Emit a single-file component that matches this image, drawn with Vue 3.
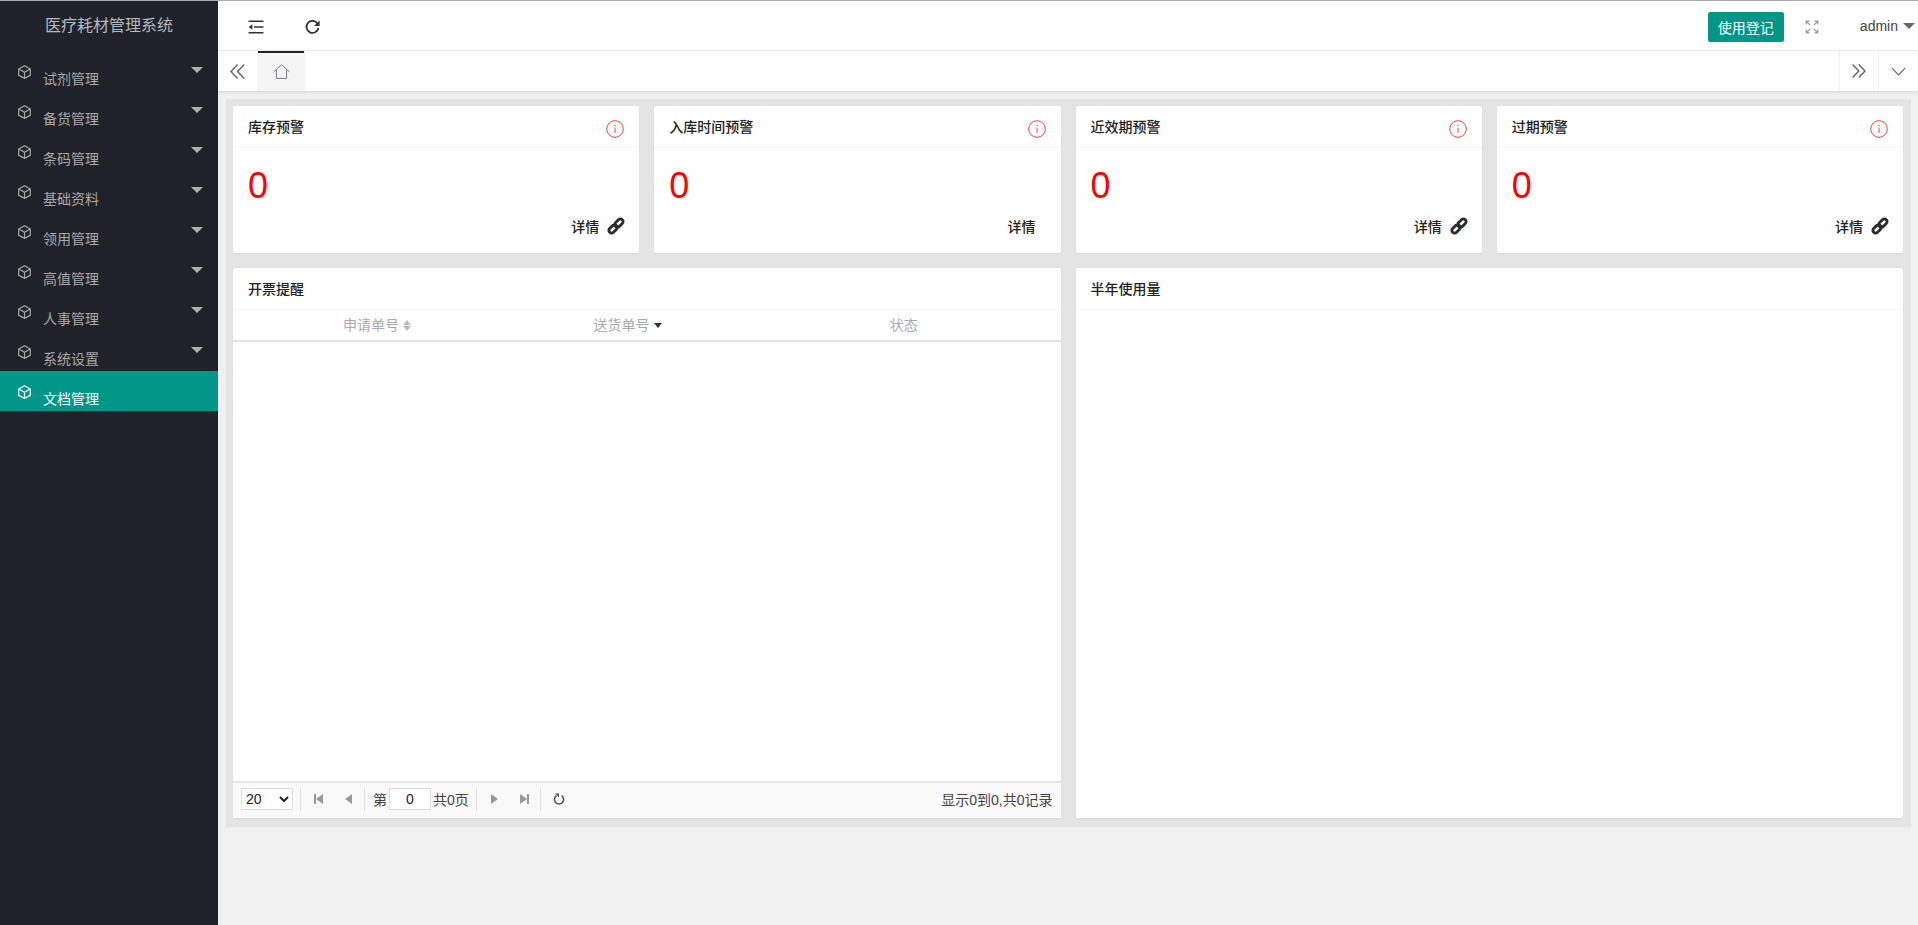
<script setup>
const menus = ['试剂管理','备货管理','条码管理','基础资料','领用管理','高值管理','人事管理','系统设置','文档管理']
const cards = [
  { title: '库存预警', link: true },
  { title: '入库时间预警', link: false },
  { title: '近效期预警', link: true },
  { title: '过期预警', link: true }
]
</script>

<template>
  <div class="app">
    <aside class="side">
      <div class="logo">医疗耗材管理系统</div>
      <nav class="menu">
        <div v-for="(m, i) in menus" :key="m" class="item" :class="{ active: i === 8 }">
          <svg class="cube" viewBox="0 0 13 14" width="13" height="14" fill="none" stroke="currentColor" stroke-width="1.2">
            <path d="M6.5.7 12.3 4V10.3L6.5 13.4.7 10.3V4Z" />
            <path d="M.9 4.1 6.5 7.2 12.1 4.1M6.5 7.2V13.2" />
          </svg>
          <span class="label">{{ m }}</span>
          <i v-if="i !== 8" class="caret"></i>
        </div>
      </nav>
    </aside>
    <main class="main">
      <header class="top">
        <div class="top-left">
          <svg viewBox="0 0 16 14" width="16" height="14" fill="none" stroke="#333" stroke-width="1.6">
            <path d="M.5 1.2H15.5M6 7H15.5M.5 12.8H15.5" />
            <path d="M4.4 4.2 .6 7 4.4 9.8Z" fill="#333" stroke="none" />
          </svg>
          <svg viewBox="0 0 15 14" width="15" height="14" fill="none" stroke="#333" stroke-width="1.9">
            <path d="M12.4 3.4A6 6 0 1 0 13.4 8" />
            <path d="M14.6 .4V6H9Z" fill="#333" stroke="none" />
          </svg>
        </div>
        <div class="top-right">
          <button class="btn">使用登记</button>
          <svg class="full" viewBox="0 0 14 14" width="14" height="14" fill="none" stroke="#999" stroke-width="1.2">
            <path d="M1.2 4.6V1.2H4.6M1.2 1.2 5 5M9.4 1.2H12.8V4.6M12.8 1.2 9 5M1.2 9.4V12.8H4.6M1.2 12.8 5 9M9.4 12.8H12.8V9.4M12.8 12.8 9 9" />
          </svg>
          <span class="user">admin</span>
          <i class="user-caret"></i>
        </div>
      </header>
      <div class="tabs">
        <div class="tab-arrow">
          <svg viewBox="0 0 15 15" width="15" height="15" fill="none" stroke="#667" stroke-width="1.5">
            <path d="M7.6.6 1 7.5 7.6 14.4M14.2.6 7.6 7.5 14.2 14.4" />
          </svg>
        </div>
        <div class="tab-home">
          <svg viewBox="0 0 17 15" width="17" height="15" fill="none" stroke="#778" stroke-width="1">
            <path d="M.6 7.8 8.5.8 16.4 7.8M3.4 5.8V14.4H13.6V5.8" />
          </svg>
        </div>
        <div class="tab-fill"></div>
        <div class="tab-end e1">
          <svg viewBox="0 0 14 14" width="14" height="14" fill="none" stroke="#667" stroke-width="1.5">
            <path d="M.6.6 6.8 7 .6 13.4M6.8.6 13 7 6.8 13.4" />
          </svg>
        </div>
        <div class="tab-end e2">
          <svg viewBox="0 0 15 9" width="15" height="9" fill="none" stroke="#667" stroke-width="1.2">
            <path d="M.8.8 7.5 7.8 14.2.8" />
          </svg>
        </div>
      </div>
      <section class="board">
        <div class="cards">
          <article v-for="c in cards" :key="c.title" class="card stat">
            <div class="card-head">
              <span>{{ c.title }}</span>
              <svg viewBox="0 0 18 18" width="18" height="18" fill="none" stroke="#f4433c" stroke-width="1">
                <circle cx="9" cy="9" r="8.3" />
                <path d="M9 7.6V13M9 4.6V6" />
              </svg>
            </div>
            <div class="num">0</div>
            <div class="detail" :class="{ nolink: !c.link }">
              <b>详情</b>
              <svg v-if="c.link" viewBox="-1 -1 20 20" width="18" height="18" fill="none" stroke="#2a2c33" stroke-width="3.2">
                <rect x="7.05" y="2.7" width="10.5" height="6" rx="3" transform="rotate(-45 12.3 5.7)" />
                <rect x=".45" y="9.3" width="10.5" height="6" rx="3" transform="rotate(-45 5.7 12.3)" />
              </svg>
            </div>
          </article>
        </div>
        <div class="panels">
          <article class="card panel">
            <div class="card-head"><span>开票提醒</span></div>
            <div class="thead">
              <div class="th">申请单号<span class="sort"><i class="up"></i><i class="down"></i></span></div>
              <div class="th">送货单号<i class="sort-down"></i></div>
              <div class="th c3">状态</div>
            </div>
            <div class="tbody"></div>
            <div class="pager">
              <select class="size"><option>20</option></select>
              <span class="sep s1"></span>
              <span class="pg"><i class="bar"></i><i class="tri-l"></i></span>
              <span class="pg"><i class="tri-l"></i></span>
              <span class="sep s2"></span>
              <span class="txt">第</span>
              <input class="page-in" value="0" />
              <span class="txt">共0页</span>
              <span class="sep s3"></span>
              <span class="pg"><i class="tri-r"></i></span>
              <span class="pg"><i class="tri-r"></i><i class="bar"></i></span>
              <span class="sep"></span>
              <svg class="reload" viewBox="0 0 12 12" width="12" height="12" fill="none" stroke="#555" stroke-width="1.6">
                <path d="M3.4 2.6A4.6 4.6 0 1 0 8.6 2.6" />
                <path d="M2 .4H6V4.4Z" fill="#555" stroke="none" />
              </svg>
              <span class="info">显示0到0,共0记录</span>
            </div>
          </article>
          <article class="card panel">
            <div class="card-head"><span>半年使用量</span></div>
          </article>
        </div>
      </section>
    </main>
  </div>
</template>

<style>
html, body { margin: 0; background: #f0f0f0; }
</style>

<style scoped>
.app {
  display: flex;
  height: 925px;
  overflow: hidden;
  border-top: 1px solid #aaa;
  box-sizing: border-box;
  font-family: "Liberation Sans", "Noto Sans CJK SC", sans-serif;
  font-size: 14px;
  color: #333;
}
.side { width: 218px; flex: none; background: #20222a; }
.logo { height: 50px; line-height: 50px; text-align: center; font-size: 16px; color: #b4bac0; }
.menu { display: flex; flex-direction: column; }
.item {
  height: 40px;
  display: flex;
  align-items: flex-start;
  color: #a9a9a9;
  position: relative;
  padding-left: 18px;
}
.item.active { background: #009688; color: #fff; }
.cube { margin-top: 14px; flex: none; }
.label { margin: 18px 0 0 12px; line-height: 21px; font-size: 14px; }
.caret {
  position: absolute;
  left: 191px;
  top: 16px;
  border: 6px solid transparent;
  border-top: 6px solid #b0b0b0;
  border-bottom: 0;
}
.main { flex: 1; min-width: 0; display: flex; flex-direction: column; }
.top {
  height: 50px;
  box-sizing: border-box;
  padding-top: 3px;
  background: #fff;
  display: flex;
  align-items: center;
  justify-content: space-between;
  border-bottom: 1px solid #f0f0f0;
}
.top-left { display: flex; align-items: center; padding-left: 30px; gap: 41px; }
.top-right { display: flex; align-items: center; }
.btn {
  width: 76px;
  height: 30px;
  background: #009688;
  border: 0;
  border-radius: 2px;
  color: #fff;
  font: 14px "Liberation Sans", "Noto Sans CJK SC", sans-serif;
  padding: 0;
}
.full { margin-left: 21px; }
.user { margin-left: 41px; color: #444; font-size: 14px; margin-top: -2px; }
.user-caret {
  margin: -2px 3px 0 5px;
  border: 6px solid transparent;
  border-top: 6px solid #666;
  border-bottom: 0;
}
.tabs {
  height: 40px;
  flex: none;
  background: #fff;
  display: flex;
  box-shadow: 0 1px 3px rgba(0, 0, 0, .12);
  position: relative;
}
.tab-arrow { width: 39px; display: flex; align-items: center; justify-content: center; }
.tab-home {
  width: 48px;
  background: #f5f5f5;
  display: flex;
  align-items: center;
  justify-content: center;
  position: relative;
}
.tab-home::before {
  content: "";
  position: absolute;
  left: 1px;
  right: 1px;
  top: 0;
  height: 2px;
  background: #20222a;
}
.tab-fill { flex: 1; }
.tab-end {
  box-sizing: border-box;
  border-left: 1px solid #f0f0f0;
  display: flex;
  align-items: center;
  justify-content: center;
}
.e1 { width: 39px; }
.e2 { width: 40px; }
.board {
  margin: 8px 7px 0 8px;
  height: 728px;
  box-sizing: border-box;
  background: #e4e4e4;
  padding: 7px 8px 7px 7px;
  display: flex;
  flex-direction: column;
  gap: 15px;
}
.cards { display: grid; grid-template-columns: repeat(4, 1fr); gap: 15px; height: 147px; flex: none; }
.card {
  background: #fff;
  border-radius: 2px;
  box-shadow: 0 1px 2px rgba(0, 0, 0, .05);
  display: flex;
  flex-direction: column;
  overflow: hidden;
}
.card-head {
  height: 42px;
  flex: none;
  box-sizing: border-box;
  border-bottom: 1px solid #f6f6f6;
  padding: 0 15px 2px;
  display: flex;
  justify-content: space-between;
  align-items: center;
  font-size: 14px;
  font-weight: 500;
  color: #222;
}
.stat .card-head svg { margin-top: 7px; }
.num { font-size: 36px; line-height: 44px; color: #f00; padding: 16px 15px 0; }
.detail {
  display: flex;
  justify-content: flex-end;
  align-items: center;
  gap: 8px;
  padding: 7px 14px 0;
  color: #222;
  height: 22px;
}
.detail b { font-weight: 500; font-size: 14px; }
.detail.nolink { padding-right: 25px; }
.panels { display: grid; grid-template-columns: repeat(2, 1fr); gap: 15px; height: 550px; flex: none; }
.panel { height: 550px; }
.thead {
  height: 32px;
  box-sizing: border-box;
  flex: none;
  display: grid;
  grid-template-columns: 288px 213px 1fr;
  align-items: center;
  border-bottom: 2px solid #e4e4e4;
  color: #aaa;
  font-size: 14px;
}
.th { display: flex; align-items: center; justify-content: center; line-height: 20px; }
.c3 { padding-left: 13px; }
.sort { display: flex; flex-direction: column; gap: 1px; margin-left: 4px; }
.sort i { border: 4px solid transparent; display: block; }
.sort .up { border-bottom: 5px solid #bbb; border-top: 0; }
.sort .down { border-top: 5px solid #bbb; border-bottom: 0; }
.sort-down {
  display: block;
  margin-left: 4px;
  border: 4px solid transparent;
  border-top: 5px solid #333;
  border-bottom: 0;
}
.tbody { flex: 1; }
.pager {
  height: 37px;
  flex: none;
  box-sizing: border-box;
  background: #f9f9f9;
  border-top: 2px solid #e4e4e4;
  display: flex;
  align-items: center;
  padding: 0 8px 3px;
  font-size: 14px;
  color: #444;
}
.size {
  width: 52px;
  height: 22px;
  background: #fff;
  border: 1px solid #ddd;
  font: 14px "Liberation Sans", sans-serif;
  color: #222;
  padding: 0;
}
.sep { width: 1px; height: 24px; background: #ddd; flex: none; }
.s1 { margin: 0 2px 0 7px; }
.s2 { margin: 0 8px 0 1px; }
.s3 { margin: 0 3px 0 7px; }
.pg { width: 30px; height: 14px; display: flex; align-items: center; justify-content: center; flex: none; }
.bar { width: 2px; height: 10px; background: #999; }
.tri-l { border: 5.5px solid transparent; border-right: 7px solid #999; border-left: 0; }
.tri-r { border: 5.5px solid transparent; border-left: 7px solid #999; border-right: 0; }
.txt { white-space: nowrap; }
.page-in {
  width: 42px;
  height: 22px;
  box-sizing: border-box;
  border: 1px solid #ddd;
  margin: 0 2px;
  text-align: center;
  font: 14px "Liberation Sans", sans-serif;
  color: #222;
  padding: 0;
  background: #fff;
}
.reload { margin-left: 12px; }
.info { margin-left: auto; }
</style>
